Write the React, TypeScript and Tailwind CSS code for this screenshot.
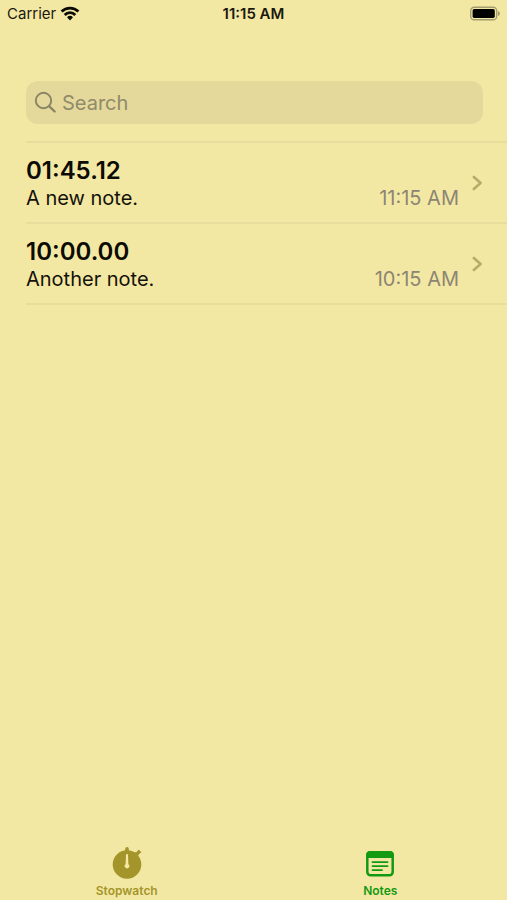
import { useState } from "react";

type Note = { id: number; elapsed: string; text: string; time: string };

const notes: Note[] = [
  { id: 1, elapsed: "01:45.12", text: "A new note.", time: "11:15 AM" },
  { id: 2, elapsed: "10:00.00", text: "Another note.", time: "10:15 AM" },
];

function WifiIcon() {
  return (
    <svg className="h-4 w-5" viewBox="0 0 20 16" fill="none" stroke="#0b0a06" strokeWidth="2.8" aria-hidden="true">
      <path d="M1.6 5.500a12 12 0 0 1 16.800 0" />
      <path d="M4.700 8.900a7.500 7.500 0 0 1 10.600 0" />
      <path d="M10 14.400 7 11.300a4.300 4.300 0 0 1 6 0z" fill="#0b0a06" stroke="none" />
    </svg>
  );
}

function BatteryIcon() {
  return (
    <svg className="h-4 w-[30px]" viewBox="1 0 30 16" aria-hidden="true">
      <rect x="1.700" y="1.200" width="26" height="12.600" rx="3.600" fill="none" stroke="#a39c6d" strokeWidth="1.400" />
      <rect x="3.600" y="3.100" width="22.200" height="8.800" rx="1.600" fill="#000" />
      <path d="M29 5.100c1.300.5 1.900 1.400 1.900 2.400s-.6 1.900-1.900 2.400z" fill="#a39c6d" />
    </svg>
  );
}

function StatusBar() {
  return (
    <header className="grid h-7 grid-cols-3 items-center px-[7px] text-[15px] text-[#1b190f]">
      <div className="flex items-center gap-1">
        <span>Carrier</span>
        <WifiIcon />
      </div>
      <span className="text-center font-semibold whitespace-nowrap">11:15 AM</span>
      <div className="flex justify-end">
        <BatteryIcon />
      </div>
    </header>
  );
}

function SearchIcon() {
  return (
    <svg className="size-6 shrink-0" viewBox="0 0 24 24" fill="none" stroke="#8a8465" strokeWidth="1.9" strokeLinecap="round" aria-hidden="true">
      <circle cx="9.500" cy="9.500" r="7.700" />
      <path d="m15.300 15.300 5.400 5.200" strokeWidth="2.300" />
    </svg>
  );
}

function Chevron() {
  return (
    <svg className="h-4 w-3 shrink-0" viewBox="0 0 12 16" fill="none" stroke="#b5ab6b" strokeWidth="2.600" strokeLinecap="round" strokeLinejoin="round" aria-hidden="true">
      <path d="m2.800 2 6.800 6-6.800 6" />
    </svg>
  );
}

function NoteRow({ note }: { note: Note }) {
  return (
    <li className="border-b-2 border-[#e8dd9d]">
      <a href={`#note-${note.id}`} className="flex h-[79px] items-center gap-3 pr-6">
        <div className="min-w-0 flex-1 pt-1">
          <h2 className="text-2xl leading-7 font-semibold text-[#0c0b06]">{note.elapsed}</h2>
          <div className="flex items-baseline justify-between text-xl leading-[27px]">
            <p className="text-[#14120a]">{note.text}</p>
            <time className="text-[#8d8573]">{note.time}</time>
          </div>
        </div>
        <Chevron />
      </a>
    </li>
  );
}

function StopwatchIcon() {
  return (
    <svg className="size-8" viewBox="0 0 32 32" aria-hidden="true">
      <circle cx="16" cy="17.500" r="14.300" fill="#a3952a" />
      <path d="M14.200 1.800a1.800 1.800 0 0 1 3.600 0v3h-3.600z" fill="#a3952a" />
      <path d="m23.400 5.600 2.400-.7.7-1.100 1.300-1.100 2.500 2.300-1.200 1.400-1.200.5-.8 2.400z" fill="#a3952a" />
      <path d="M15 8a1 1 0 0 1 2 0l.4 9.200a2.300 2.300 0 1 1-2.800 0z" fill="#f4e9a4" />
    </svg>
  );
}

function NotesIcon() {
  return (
    <svg className="size-8" viewBox="0 0 32 32" fill="none" stroke="#139a13" aria-hidden="true">
      <rect x="3.300" y="5.300" width="25.400" height="23" rx="3.200" strokeWidth="2.500" />
      <path d="M2.100 11V8a4 4 0 0 1 4-4h19.800a4 4 0 0 1 4 4v3z" fill="#139a13" stroke="none" />
      <path d="M8.500 15.100h15M8.500 19.100h15M8.500 23.100h9.500" strokeWidth="1.900" strokeLinecap="round" />
    </svg>
  );
}

export default function App() {
  const [query, setQuery] = useState("");
  return (
    <div className="flex min-h-screen flex-col bg-[#f3e8a3] font-['Inter','Liberation_Sans',sans-serif]">
      <StatusBar />
      <main className="flex-1 pt-[53px] pl-[26px]">
        <div className="mr-6 flex h-[43px] items-center gap-1 rounded-xl bg-[#e4d99b] px-2">
          <SearchIcon />
          <input
            type="search"
            aria-label="Search"
            placeholder="Search"
            value={query}
            onChange={(e) => setQuery(e.target.value)}
            className="min-w-0 flex-1 bg-transparent text-xl text-[#14120a] outline-none placeholder:text-[#918a6b]"
          />
        </div>
        <ul className="mt-[17px] border-t-2 border-[#e8dd9d]">
          {notes.map((note) => (
            <NoteRow key={note.id} note={note} />
          ))}
        </ul>
      </main>
      <nav className="grid grid-cols-2 pb-px text-xs font-semibold">
        <a href="#stopwatch" className="flex flex-col items-center gap-1 text-[#a3952a]">
          <StopwatchIcon />
          <span>Stopwatch</span>
        </a>
        <a href="#notes" aria-current="page" className="flex flex-col items-center gap-1 text-[#139a13]">
          <NotesIcon />
          <span>Notes</span>
        </a>
      </nav>
    </div>
  );
}
